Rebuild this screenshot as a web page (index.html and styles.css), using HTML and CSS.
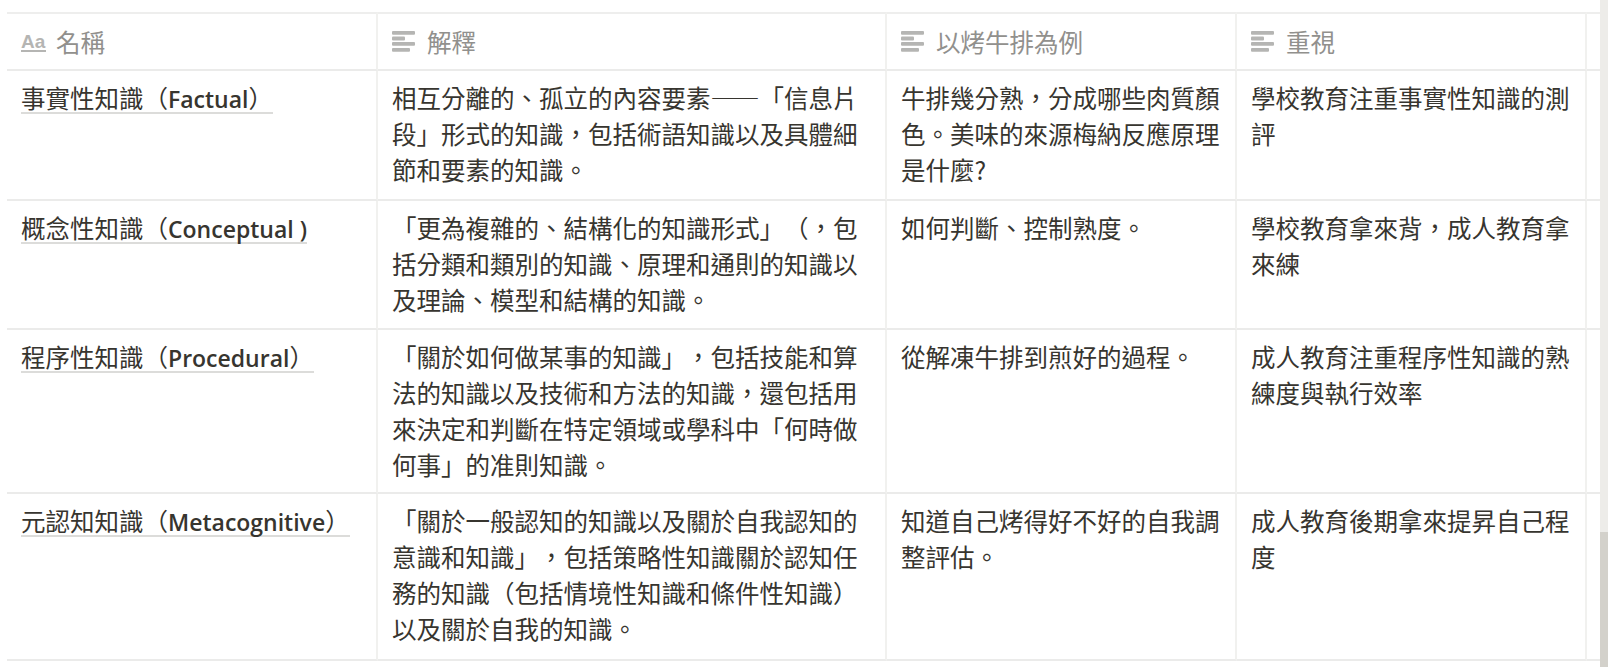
FILE: index.html
```html
<!DOCTYPE html>
<html lang="zh-Hant">
<head>
<meta charset="utf-8">
<title>知識類型</title>
<link rel="stylesheet" href="styles.css">
</head>
<body>
<div class="page">
<table class="db">
<colgroup><col class="c1"><col class="c2"><col class="c3"><col class="c4"><col class="c5"></colgroup>
<thead>
<tr>
<th><span class="hd"><span class="aa">Aa</span>名稱</span></th>
<th><span class="hd"><svg class="ic" viewBox="0 0 24 21"><rect y="0" width="23" height="3.8" rx="1"/><rect y="5.6" width="13" height="3.8" rx="1"/><rect y="11" width="23" height="3.8" rx="1"/><rect y="17" width="18" height="3.8" rx="1"/></svg>解釋</span></th>
<th><span class="hd"><svg class="ic" viewBox="0 0 24 21"><rect y="0" width="23" height="3.8" rx="1"/><rect y="5.6" width="13" height="3.8" rx="1"/><rect y="11" width="23" height="3.8" rx="1"/><rect y="17" width="18" height="3.8" rx="1"/></svg>以烤牛排為例</span></th>
<th><span class="hd"><svg class="ic" viewBox="0 0 24 21"><rect y="0" width="23" height="3.8" rx="1"/><rect y="5.6" width="13" height="3.8" rx="1"/><rect y="11" width="23" height="3.8" rx="1"/><rect y="17" width="18" height="3.8" rx="1"/></svg>重視</span></th>
<th></th>
</tr>
</thead>
<tbody>
<tr class="r1">
<td><span class="link">事實性知識（<b>Factual</b>）</span></td>
<td>相互分離的、孤立的內容要素——「信息片段」形式的知識，包括術語知識以及具體細節和要素的知識。</td>
<td>牛排幾分熟，分成哪些肉質顏色。美味的來源梅納反應原理是什麼?</td>
<td>學校教育注重事實性知識的測評</td>
<td></td>
</tr>
<tr class="r2">
<td><span class="link">概念性知識（<b>Conceptual )</b></span></td>
<td>「更為複雜的、結構化的知識形式」（，包括分類和類別的知識、原理和通則的知識以及理論、模型和結構的知識。</td>
<td>如何判斷、控制熟度。</td>
<td>學校教育拿來背，成人教育拿來練</td>
<td></td>
</tr>
<tr class="r3">
<td><span class="link">程序性知識（<b>Procedural</b>）</span></td>
<td>「關於如何做某事的知識」，包括技能和算法的知識以及技術和方法的知識，還包括用來決定和判斷在特定領域或學科中「何時做何事」的准則知識。</td>
<td>從解凍牛排到煎好的過程。</td>
<td>成人教育注重程序性知識的熟練度與執行效率</td>
<td></td>
</tr>
<tr class="r4">
<td><span class="link">元認知知識（<b>Metacognitive</b>）</span></td>
<td>「關於一般認知的知識以及關於自我認知的意識和知識」，包括策略性知識關於認知任務的知識（包括情境性知識和條件性知識）以及關於自我的知識。</td>
<td>知道自己烤得好不好的自我調整評估。</td>
<td>成人教育後期拿來提昇自己程度</td>
<td></td>
</tr>
</tbody>
</table>
<div class="track"><div class="thumb"></div></div>
</div>
</body>
</html>
```
FILE: styles.css
```css
html, body { margin: 0; padding: 0; height: 100%; overflow: hidden; background: #fff; }
body { font-family: "Noto Sans CJK TC", "Open Sans", sans-serif; color: #37352f; }
.page { display: flex; justify-content: space-between; height: 667px; padding-left: 7px; box-sizing: border-box; }
.db { border-collapse: separate; border-spacing: 0; table-layout: fixed; width: 1593px; height: 649px; margin-top: 12px; font-size: 24.5px; line-height: 36px; text-spacing-trim: space-all; }
.c1 { width: 371px; } .c2 { width: 509px; } .c3 { width: 350px; } .c4 { width: 350px; } .c5 { width: 13px; }
.db thead tr { height: 59px; }
.db th { font-weight: 400; text-align: left; color: #91908d; padding: 0 14px; border-top: 2px solid #eeeeed; border-bottom: 2px solid #ebebea; border-right: 2px solid #f1f1ef; vertical-align: middle; }
.db td { padding: 9px 14px 0; vertical-align: top; border-bottom: 2px solid #ebebea; border-right: 2px solid #f1f1ef; }
.db th:last-child, .db td:last-child { border-right: 0; padding: 0; }
.hd { display: flex; align-items: center; gap: 11px; }
.ic { width: 24px; height: 21px; fill: #b5b5b3; flex: none; }
.aa { flex: none; width: 25px; margin: 2px -1px 0 0; padding-bottom: 1px; border-bottom: 2px solid #b5b5b3; font-family: "Liberation Sans", sans-serif; font-weight: 700; font-size: 19px; line-height: 15px; color: #b5b5b3; white-space: nowrap; }
.r1 { height: 130px; } .r2 { height: 129px; } .r3 { height: 164px; } .r4 { height: 167px; }
.link { display: block; width: fit-content; padding-top: 5px; border-bottom: 2px solid #dcdcda; line-height: 25px; }
.link b { font-family: "Open Sans", sans-serif; font-weight: 600; font-size: 23px; }
.track { width: 8px; height: 100%; background: #edece9; position: relative; flex: none; }
.thumb { position: absolute; left: 0; right: 0; top: 532px; bottom: 0; background: #d3d1cb; }
```
